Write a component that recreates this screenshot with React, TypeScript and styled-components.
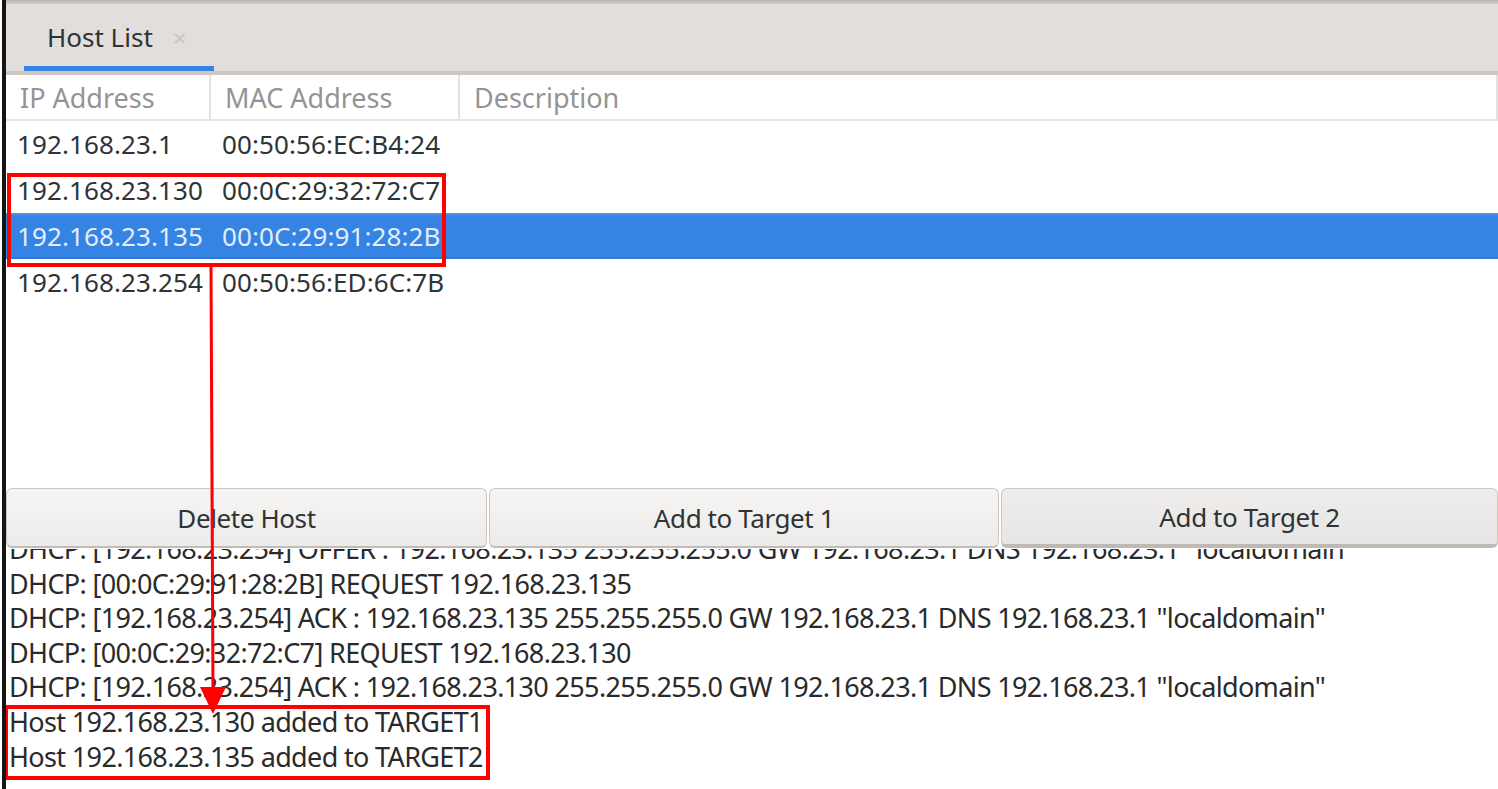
import React from 'react';
import styled, { createGlobalStyle } from 'styled-components';

interface IHost {
    ip: string;
    mac: string;
    description?: string;
}

const hosts: IHost[] = [
    { ip: '192.168.23.1', mac: '00:50:56:EC:B4:24' },
    { ip: '192.168.23.130', mac: '00:0C:29:32:72:C7' },
    { ip: '192.168.23.135', mac: '00:0C:29:91:28:2B' },
    { ip: '192.168.23.254', mac: '00:50:56:ED:6C:7B' },
];

const logLines = [
    'DHCP: [192.168.23.254] OFFER : 192.168.23.135 255.255.255.0 GW 192.168.23.1 DNS 192.168.23.1 "localdomain"',
    'DHCP: [00:0C:29:91:28:2B] REQUEST 192.168.23.135',
    'DHCP: [192.168.23.254] ACK : 192.168.23.135 255.255.255.0 GW 192.168.23.1 DNS 192.168.23.1 "localdomain"',
    'DHCP: [00:0C:29:32:72:C7] REQUEST 192.168.23.130',
    'DHCP: [192.168.23.254] ACK : 192.168.23.130 255.255.255.0 GW 192.168.23.1 DNS 192.168.23.1 "localdomain"',
    'Host 192.168.23.130 added to TARGET1',
    'Host 192.168.23.135 added to TARGET2',
];

const SELECTED = 2;
const COL_IP = 205;
const COL_MAC = 249;

function App() {
    return (
        <>
            <GlobalStyle />
            <StyledWindow>
                <StyledTopEdge />
                <StyledTabBar>
                    <StyledTab>
                        Host List
                        <span className="close">×</span>
                    </StyledTab>
                </StyledTabBar>
                <StyledTable>
                    <StyledHeader>
                        <StyledHeaderCell $width={COL_IP}>IP Address</StyledHeaderCell>
                        <StyledHeaderCell $width={COL_MAC}>MAC Address</StyledHeaderCell>
                        <StyledHeaderCell>Description</StyledHeaderCell>
                    </StyledHeader>
                    {hosts.map((h, i) => (
                        <StyledRow key={h.ip} $selected={i === SELECTED}>
                            <StyledCell $width={COL_IP}>{h.ip}</StyledCell>
                            <StyledCell $width={COL_MAC}>{h.mac}</StyledCell>
                            <StyledCell>{h.description}</StyledCell>
                        </StyledRow>
                    ))}
                </StyledTable>
                <StyledButtonBar>
                    <StyledButton $width={481}>Delete Host</StyledButton>
                    <StyledButton $width={510}>Add to Target 1</StyledButton>
                    <StyledButton $active>Add to Target 2</StyledButton>
                </StyledButtonBar>
                <StyledLog>
                    <div className="lines">
                        {logLines.map((l, i) => (
                            <div key={i}>{l}</div>
                        ))}
                    </div>
                </StyledLog>

                {/* red annotation overlay */}
                <StyledMark $left={7} $top={173} $width={439} $height={94} />
                <StyledMark $left={4} $top={705} $width={486} $height={75} />
                <StyledArrow width="40" height="460" viewBox="0 0 40 460">
                    <line x1="13" y1="0" x2="15" y2="425" stroke="#ff0000" strokeWidth="3" />
                    <polygon points="2,420 28,420 15,447" fill="#ff0000" />
                </StyledArrow>
            </StyledWindow>
        </>
    );
}

export default App;

const GlobalStyle = createGlobalStyle`
    html, body {
        margin: 0;
        padding: 0;
        background: #ffffff;
    }
    body {
        font-family: "Noto Sans", "DejaVu Sans", sans-serif;
        color: #2e3436;
    }
`;

const StyledWindow = styled.div`
    position: relative;
    width: 1496px;
    height: 789px;
    margin-left: 2px;
    overflow: hidden;
    display: flex;
    flex-direction: column;
    box-sizing: border-box;
    border-left: 4px solid #151515;
    background: #ffffff;
`;

const StyledTopEdge = styled.div`
    height: 4px;
    background: linear-gradient(#b9b4af, #d3cfcb);
    flex: none;
`;

const StyledTabBar = styled.div`
    flex: none;
    height: 71px;
    box-sizing: border-box;
    background: #e1dedb;
    border-bottom: 4px solid #cdc8c3;
    display: flex;
    align-items: flex-end;
    padding-left: 18px;
`;

const StyledTab = styled.div`
    display: flex;
    align-items: center;
    width: 190px;
    height: 67px;
    box-sizing: border-box;
    padding: 4px 0 0 23px;
    font-size: 26px;
    color: #2e3436;
    border-bottom: 5px solid #3584e4;
    .close {
        margin-left: 20px;
        font-size: 24px;
        color: #c7c4c0;
    }
`;

const StyledTable = styled.div`
    flex: none;
    height: 412px;
    display: flex;
    flex-direction: column;
    background: #ffffff;
`;

const StyledHeader = styled.div`
    display: flex;
    flex: none;
    height: 46px;
    box-sizing: border-box;
    border-bottom: 2px solid #e8e5e2;
`;

const StyledHeaderCell = styled.div<{ $width?: number }>`
    ${(p) => (p.$width ? `width: ${p.$width}px; flex: none;` : 'flex: 1;')}
    box-sizing: border-box;
    display: flex;
    align-items: center;
    padding-left: 14px;
    border-right: 2px solid #e4e1de;
    font-size: 27px;
    color: #949494;
`;

const StyledRow = styled.div<{ $selected?: boolean }>`
    display: flex;
    flex: none;
    height: 46px;
    box-sizing: border-box;
    background: ${(p) => (p.$selected ? '#3584e4' : 'transparent')};
    color: ${(p) => (p.$selected ? '#e3edfb' : '#2e3436')};
    border-top: 2px solid ${(p) => (p.$selected ? '#4a91e7' : 'transparent')};
    border-bottom: 2px solid ${(p) => (p.$selected ? '#2f7ad8' : 'transparent')};
`;

const StyledCell = styled.div<{ $width?: number }>`
    ${(p) => (p.$width ? `width: ${p.$width}px; flex: none;` : 'flex: 1;')}
    box-sizing: border-box;
    display: flex;
    align-items: center;
    padding-left: 11px;
    font-size: 26px;
    letter-spacing: 0.1px;
    white-space: nowrap;
`;

const StyledButtonBar = styled.div`
    flex: none;
    height: 62px;
    display: flex;
    gap: 2px;
    padding: 1px 0 1px;
    box-sizing: border-box;
    background: #ffffff;
`;

const StyledButton = styled.button<{ $width?: number; $active?: boolean }>`
    ${(p) => (p.$width ? `width: ${p.$width}px; flex: none;` : 'flex: 1;')}
    margin: 0;
    padding: 0;
    box-sizing: border-box;
    font-family: "Noto Sans", "DejaVu Sans", sans-serif;
    font-size: 26px;
    letter-spacing: -0.4px;
    color: #2e3436;
    border: 1px solid #cdc7c2;
    border-bottom: ${(p) => (p.$active ? '4px solid #bfb9b4' : '2px solid #c2bcb6')};
    border-radius: 6px;
    background: ${(p) =>
        p.$active
            ? 'linear-gradient(#efedeb, #e8e6e4)'
            : 'linear-gradient(#f6f5f4, #edebe9)'};
`;

const StyledLog = styled.div`
    flex: 1;
    overflow: hidden;
    padding-left: 3px;
    font-size: 27px;
    color: #2a2a2a;
    letter-spacing: -0.65px;
    .lines {
        margin-top: -17px;
        line-height: 34.6px;
        white-space: nowrap;
    }
`;

const StyledMark = styled.div<{ $left: number; $top: number; $width: number; $height: number }>`
    position: absolute;
    left: ${(p) => p.$left - 6}px;
    top: ${(p) => p.$top}px;
    width: ${(p) => p.$width}px;
    height: ${(p) => p.$height}px;
    box-sizing: border-box;
    border: 4px solid #ff0000;
    pointer-events: none;
`;

const StyledArrow = styled.svg`
    position: absolute;
    left: 192px;
    top: 267px;
    pointer-events: none;
`;
